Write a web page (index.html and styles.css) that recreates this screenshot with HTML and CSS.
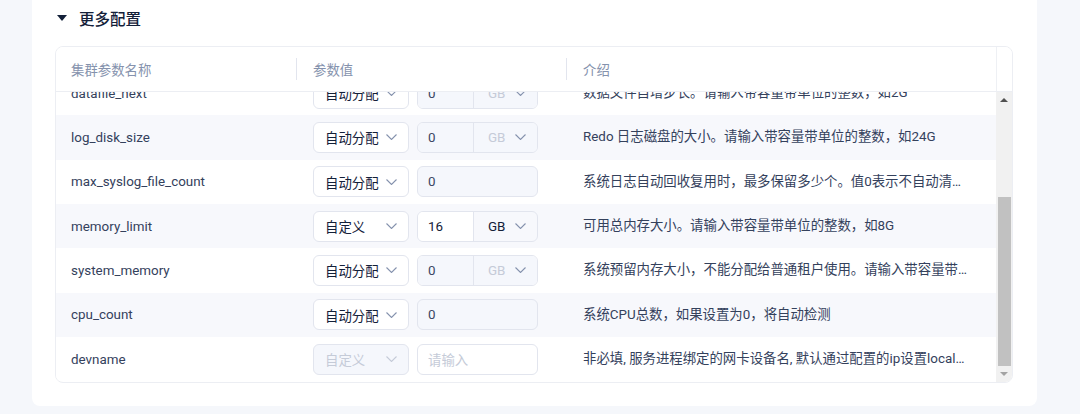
FILE: index.html
```html
<!DOCTYPE html>
<html lang="zh-CN">
    <head>
        <meta charset="utf-8">
        <title>更多配置</title>
        <link rel="stylesheet" href="styles.css">
    </head>
    <body>
        <div class="card">
            <div class="section-title">
                <svg class="caret" width="10" height="6" viewBox="0 0 10 6"><path d="M0 0 L10 0 L5 6 Z" fill="#132039"/></svg>
                <span>更多配置</span>
            </div>

            <div class="param-table">
                <div class="table-head">
                    <div class="th">集群参数名称</div>
                    <div class="th sep">参数值</div>
                    <div class="th sep">介绍</div>
                    <div class="th gutter"></div>
                </div>

                <div class="table-body">
                    <div class="rows-viewport">
                        <div class="rows">
                            <div class="row">
                                <div class="td name">datafile_next</div>
                                <div class="td value">
                                    <div class="select">自动分配<svg class="chev" viewBox="0 0 11 6"><path d="M0.5 0.5 L5.5 5.5 L10.5 0.5"/></svg></div>
                                    <div class="group disabled">
                                        <div class="num">0</div>
                                        <div class="unit">GB<svg class="chev" viewBox="0 0 11 6"><path d="M0.5 0.5 L5.5 5.5 L10.5 0.5"/></svg></div>
                                    </div>
                                </div>
                                <div class="td intro">数据文件自增步长。请输入带容量带单位的整数，如2G</div>
                            </div>

                            <div class="row striped">
                                <div class="td name">log_disk_size</div>
                                <div class="td value">
                                    <div class="select">自动分配<svg class="chev" viewBox="0 0 11 6"><path d="M0.5 0.5 L5.5 5.5 L10.5 0.5"/></svg></div>
                                    <div class="group disabled">
                                        <div class="num">0</div>
                                        <div class="unit">GB<svg class="chev" viewBox="0 0 11 6"><path d="M0.5 0.5 L5.5 5.5 L10.5 0.5"/></svg></div>
                                    </div>
                                </div>
                                <div class="td intro">Redo 日志磁盘的大小。请输入带容量带单位的整数，如24G</div>
                            </div>

                            <div class="row">
                                <div class="td name">max_syslog_file_count</div>
                                <div class="td value">
                                    <div class="select">自动分配<svg class="chev" viewBox="0 0 11 6"><path d="M0.5 0.5 L5.5 5.5 L10.5 0.5"/></svg></div>
                                    <div class="input disabled">0</div>
                                </div>
                                <div class="td intro">系统日志自动回收复用时，最多保留多少个。值0表示不自动清理。</div>
                            </div>

                            <div class="row striped">
                                <div class="td name">memory_limit</div>
                                <div class="td value">
                                    <div class="select">自定义<svg class="chev" viewBox="0 0 11 6"><path d="M0.5 0.5 L5.5 5.5 L10.5 0.5"/></svg></div>
                                    <div class="group">
                                        <div class="num">16</div>
                                        <div class="unit">GB<svg class="chev" viewBox="0 0 11 6"><path d="M0.5 0.5 L5.5 5.5 L10.5 0.5"/></svg></div>
                                    </div>
                                </div>
                                <div class="td intro">可用总内存大小。请输入带容量带单位的整数，如8G</div>
                            </div>

                            <div class="row">
                                <div class="td name">system_memory</div>
                                <div class="td value">
                                    <div class="select">自动分配<svg class="chev" viewBox="0 0 11 6"><path d="M0.5 0.5 L5.5 5.5 L10.5 0.5"/></svg></div>
                                    <div class="group disabled">
                                        <div class="num">0</div>
                                        <div class="unit">GB<svg class="chev" viewBox="0 0 11 6"><path d="M0.5 0.5 L5.5 5.5 L10.5 0.5"/></svg></div>
                                    </div>
                                </div>
                                <div class="td intro">系统预留内存大小，不能分配给普通租户使用。请输入带容量带单位的整数，如30G</div>
                            </div>

                            <div class="row striped">
                                <div class="td name">cpu_count</div>
                                <div class="td value">
                                    <div class="select">自动分配<svg class="chev" viewBox="0 0 11 6"><path d="M0.5 0.5 L5.5 5.5 L10.5 0.5"/></svg></div>
                                    <div class="input disabled">0</div>
                                </div>
                                <div class="td intro">系统CPU总数，如果设置为0，将自动检测</div>
                            </div>

                            <div class="row">
                                <div class="td name">devname</div>
                                <div class="td value">
                                    <div class="select disabled">自定义<svg class="chev" viewBox="0 0 11 6"><path d="M0.5 0.5 L5.5 5.5 L10.5 0.5"/></svg></div>
                                    <div class="input placeholder">请输入</div>
                                </div>
                                <div class="td intro">非必填, 服务进程绑定的网卡设备名, 默认通过配置的ip设置local_ip</div>
                            </div>
                        </div>
                    </div>

                    <!-- scrollbar, drawn by hand -->
                    <div class="scrollbar">
                        <div class="sb-btn"><span class="arrow-up"></span></div>
                        <div class="sb-track"><div class="sb-thumb"></div></div>
                        <div class="sb-btn"><span class="arrow-down"></span></div>
                    </div>
                </div>
            </div>
        </div>
    </body>
</html>
```

FILE: styles.css
```css
body {
    margin: 0;
    background: #f5f7fb;
    font-family: Roboto, "Noto Sans CJK SC", sans-serif;
    font-size: 13.4px;
    color: #132039;
}
.card {
    background: #fff;
    margin: 0 43px 9px 32px;
    padding: 0 24px 23px 23px;
    border-radius: 0 0 8px 8px;
}
.section-title {
    display: flex;
    align-items: center;
    height: 36px;
    margin-bottom: 10px;
    font-size: 15.5px;
    font-weight: 500;
    color: #132039;
}
.caret {
    margin: 0 12px 0 2px;
}
.param-table {
    border: 1px solid #eceef3;
    border-radius: 8px;
    overflow: hidden;
}
.table-head {
    display: grid;
    grid-template-columns: 241px 270px 1fr 16px;
    height: 44px;
    border-bottom: 1px solid #eceef3;
    background: #fff;
}
.th {
    position: relative;
    display: flex;
    align-items: center;
    padding-left: 16px;
    color: #8592ad;
}
.th:first-child {
    padding-left: 15px;
}
.th.sep::before {
    content: "";
    position: absolute;
    left: -1px;
    top: 11px;
    width: 1px;
    height: 22px;
    background: #e2e5ee;
}
.th.gutter {
    padding: 0;
    border-left: 1px solid #eef0f4;
}
.table-body {
    display: flex;
    height: 290px;
}
.rows-viewport {
    flex: 1;
    overflow: hidden;
}
.rows {
    margin-top: -21px;
}
.row {
    display: grid;
    grid-template-columns: 241px 270px 1fr;
    height: 44.33px;
    background: #fff;
}
.row.striped {
    background: #f7f8fc;
}
.td {
    display: flex;
    align-items: center;
    padding-left: 16px;
    min-width: 0;
}
.td.name {
    padding-left: 15px;
    color: #34415c;
}
.td.value {
    gap: 8px;
}
.td.intro {
    display: block;
    line-height: 44.33px;
    padding-right: 26px;
    color: #34415c;
    white-space: nowrap;
    overflow: hidden;
    text-overflow: ellipsis;
}
.select {
    box-sizing: border-box;
    width: 96px;
    height: 31px;
    display: flex;
    align-items: center;
    justify-content: space-between;
    padding: 0 11px;
    border: 1px solid #e2e5ee;
    border-radius: 6px;
    background: #fff;
    color: #132039;
}
.select.disabled {
    background: #f5f7fc;
    color: #c5cbd8;
}
.chev {
    width: 11px;
    height: 6px;
    fill: none;
    stroke: #8592ad;
    stroke-width: 1.1;
}
.select.disabled .chev {
    stroke: #c5cbd8;
}
.group {
    box-sizing: border-box;
    width: 121px;
    height: 31px;
    display: flex;
    border: 1px solid #e2e5ee;
    border-radius: 6px;
    overflow: hidden;
}
.group .num {
    width: 56px;
    display: flex;
    align-items: center;
    padding-left: 10px;
    box-sizing: border-box;
    background: #fff;
    color: #132039;
    border-right: 1px solid #e2e5ee;
}
.group .unit {
    flex: 1;
    display: flex;
    align-items: center;
    justify-content: space-between;
    padding: 0 11px 0 14px;
    color: #132039;
}
.group.disabled .num,
.group.disabled .unit {
    background: #f5f7fc;
}
.group.disabled .num {
    color: #3b4864;
}
.group.disabled .unit {
    color: #c5cbd8;
}
.input {
    box-sizing: border-box;
    width: 121px;
    height: 31px;
    display: flex;
    align-items: center;
    padding-left: 10px;
    border: 1px solid #e2e5ee;
    border-radius: 6px;
    background: #fff;
    color: #132039;
}
.input.disabled {
    background: #f5f7fc;
    color: #3b4864;
}
.input.placeholder {
    color: #c5cbd8;
}
.scrollbar {
    width: 16px;
    display: flex;
    flex-direction: column;
    background: #f1f1f1;
}
.sb-btn {
    height: 16px;
    display: flex;
    align-items: center;
    justify-content: center;
}
.arrow-up {
    border-left: 4px solid transparent;
    border-right: 4px solid transparent;
    border-bottom: 4px solid #505050;
}
.arrow-down {
    border-left: 4px solid transparent;
    border-right: 4px solid transparent;
    border-top: 4px solid #a3a3a3;
}
.sb-track {
    flex: 1;
    display: flex;
    flex-direction: column;
    justify-content: flex-end;
    padding: 0 1px 0 2px;
}
.sb-thumb {
    height: 169px;
    background: #c1c1c1;
}
```
